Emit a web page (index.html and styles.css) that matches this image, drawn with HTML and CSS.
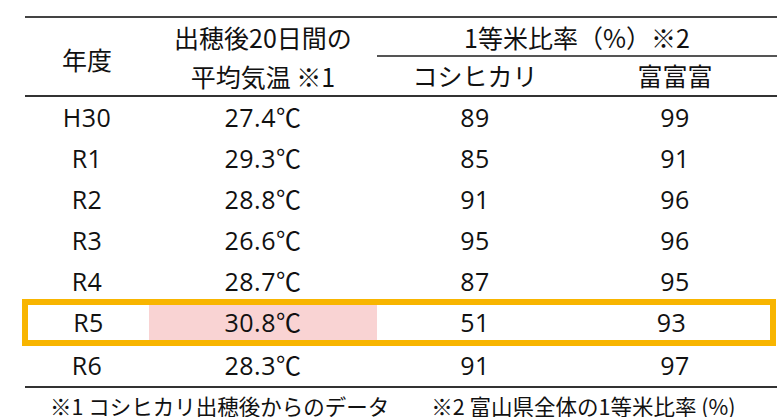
FILE: index.html
```html
<!DOCTYPE html>
<html lang="ja">
<head>
    <meta charset="UTF-8">
    <title>1等米比率</title>
    <link rel="stylesheet" href="styles.css">
</head>
<body>
    <div class="rice-table">
        <div class="head">
            <div class="h-year">年度</div>
            <div class="h-temp">出穂後20日間の<br>平均気温&nbsp;※1</div>
            <div class="h-rate">1等米比率（%）※2</div>
            <div class="h-koshi">コシヒカリ</div>
            <div class="h-fufu">富富富</div>
        </div>
        <div class="row"><div>H30</div><div>27.4℃</div><div>89</div><div>99</div></div>
        <div class="row"><div>R1</div><div>29.3℃</div><div>85</div><div>91</div></div>
        <div class="row"><div>R2</div><div>28.8℃</div><div>91</div><div>96</div></div>
        <div class="row"><div>R3</div><div>26.6℃</div><div>95</div><div>96</div></div>
        <div class="row"><div>R4</div><div>28.7℃</div><div>87</div><div>95</div></div>
        <div class="row hot"><div>R5</div><div class="hot-temp">30.8℃</div><div>51</div><div>93</div></div>
        <div class="row"><div>R6</div><div>28.3℃</div><div>91</div><div>97</div></div>
    </div>
    <div class="notes">
        <span class="note-1">※1 コシヒカリ出穂後からのデータ</span>
        <span class="note-2">※2 富山県全体の1等米比率 (%)</span>
    </div>
</body>
</html>
```

FILE: styles.css
```css
body {
    margin: 0;
    background-color: #fff;
    color: #111;
    font-family: "Noto Sans CJK JP", "Noto Sans", sans-serif;
    width: 777px;
    height: 417px;
    overflow: hidden;
}

.rice-table {
    margin: 16px 0 0 25px;
    width: 752px;
    border-top: 2px solid #444;
    border-bottom: 2px solid #333;
    font-size: 25px;
}

.head {
    display: grid;
    grid-template-columns: 124px 228px 196px 1fr;
    grid-template-rows: 39px 38px;
    border-bottom: 2px solid #333;
    text-align: center;
}

.h-year {
    grid-row: 1 / 3;
    align-self: center;
    padding-top: 4px;
}

.h-temp {
    grid-row: 1 / 3;
    line-height: 39px;
}

.h-rate {
    grid-column: 3 / 5;
    line-height: 39px;
    border-bottom: 2px solid #555;
}

.h-koshi,
.h-fufu {
    line-height: 36px;
}

.row {
    display: grid;
    grid-template-columns: 124px 228px 196px 1fr;
    height: 41px;
    line-height: 41px;
    text-align: center;
    font-family: "Open Sans", "Noto Sans CJK JP", sans-serif;
    font-size: 25px;
    letter-spacing: 0.5px;
}

.row.hot {
    grid-template-columns: 121px 228px 196px 1fr;
    height: 35px;
    line-height: 35px;
    margin: -3px 1px -1px -3px;
    border: 6px solid #f8b500;
}

.hot-temp {
    background-color: #f9d3d3;
}

.notes {
    display: flex;
    font-size: 21.5px;
    padding: 4px 0 0 50px;
    line-height: 28px;
}

.note-2 {
    margin-left: 42px;
}
```
